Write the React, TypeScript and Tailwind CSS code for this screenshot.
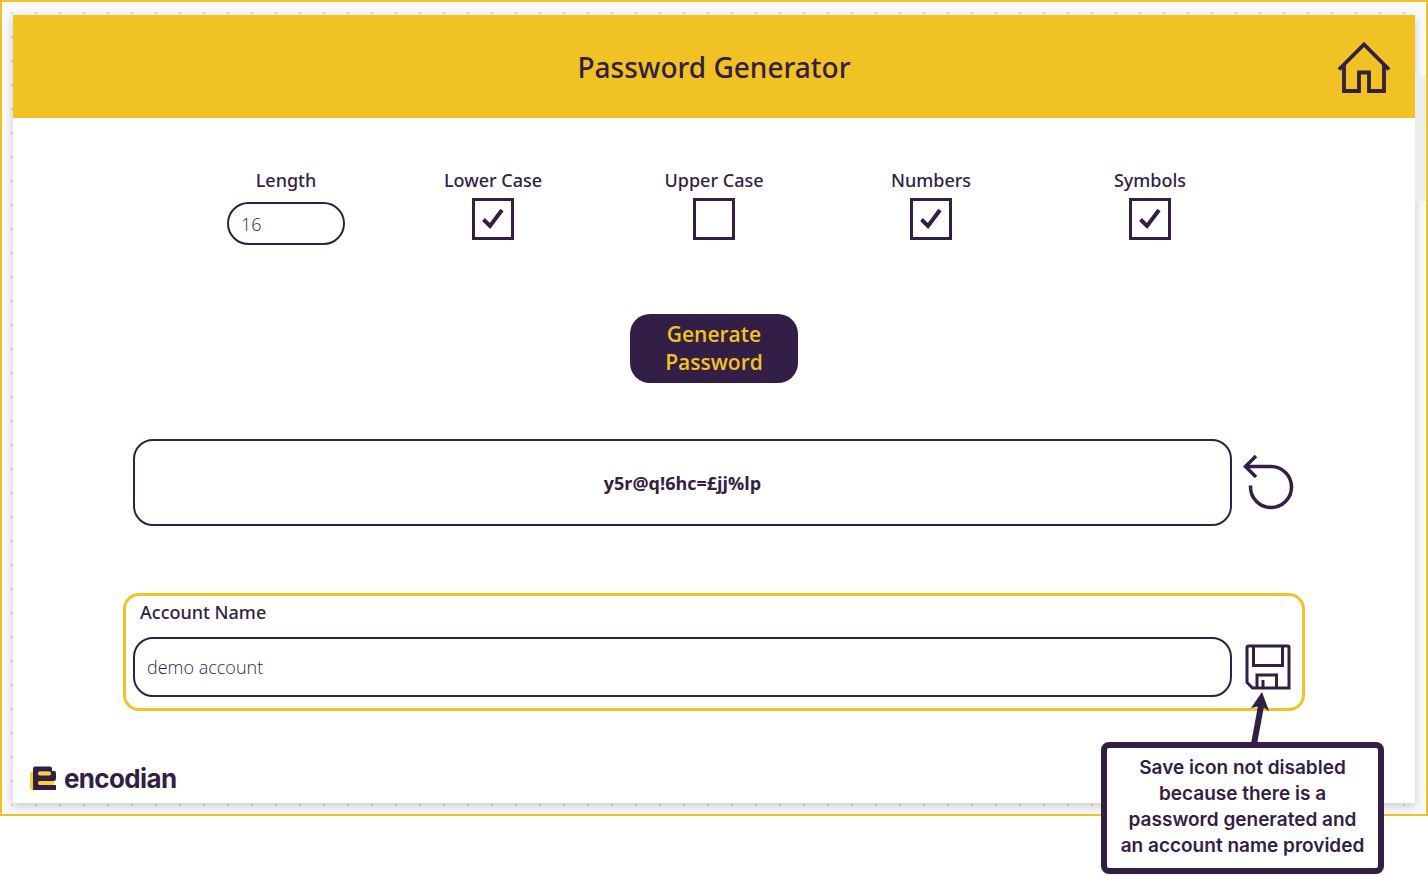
import React, { useState } from 'react';

const CHARSETS = {
  lower: 'abcdefghijklmnopqrstuvwxyz',
  upper: 'ABCDEFGHIJKLMNOPQRSTUVWXYZ',
  numbers: '0123456789',
  symbols: '!@£$%^&*=+?',
};

type CharsetKey = keyof typeof CHARSETS;

const OPTIONS: { key: CharsetKey; label: string }[] = [
  { key: 'lower', label: 'Lower Case' },
  { key: 'upper', label: 'Upper Case' },
  { key: 'numbers', label: 'Numbers' },
  { key: 'symbols', label: 'Symbols' },
];

const HomeIcon = () => (
  <svg width="54" height="54" viewBox="0 1 54 54" fill="none" stroke="currentColor" strokeWidth="3.8">
    <path d="M2 30.500 27 5.500 52 30.500" />
    <path d="M7 26v26h15V33.500h10V52H47V26" />
  </svg>
);

const UndoIcon = () => (
  <svg width="54" height="56" viewBox="0 0 54 56" fill="none" stroke="currentColor" strokeWidth="3.5">
    <path d="M4 11.500H30A20.500 20.500 0 1 1 9.500 32V30.500" />
    <path d="M15 1 4.500 11.500 15 22" />
  </svg>
);

const SaveIcon = () => (
  <svg width="46" height="46" viewBox="0 0 46 46" fill="none" stroke="currentColor" strokeWidth="3">
    <path d="M3.500 2H43q1 0 1 1v41H7.500L2 38.500V3.500Q2 2 3.500 2Z" />
    <path d="M8.500 2v19.500h29V2" />
    <path d="M12 44V31h19.500v13M18 36v8" />
  </svg>
);

const CheckMark = () => (
  <svg
    className="pointer-events-none col-start-1 row-start-1 hidden peer-checked:block"
    width="24"
    height="22"
    viewBox="0 0 24 22"
    fill="none"
    stroke="currentColor"
    strokeWidth="4"
  >
    <path d="M2.500 11.500 9 18 21 2" />
  </svg>
);

const Logo = () => (
  <div className="flex items-center gap-2">
    <svg width="26" height="26" viewBox="0 0 26 26">
      <path d="M3 6H1Q0 6 0 8V22q0 2 2 2H24V6Z" fill="#fcd02f" />
      <path
        d="M5 .5H20Q22 .5 22 2.500V5h2.500Q26 5 26 7v5.500q0 2.500-2.500 2.500H9.500q-1.500 0-1.500 2t1.500 2H26V24H3V2.500Q3 .5 5 .5ZM9.500 5.500q-1.500 0-1.500 2t1.500 2h10q1.500 0 1.500-2t-1.500-2Z"
        fill="#331e45"
        fillRule="evenodd"
      />
    </svg>
    <span className="font-['Inter',sans-serif] text-[26px] leading-8 font-bold tracking-tight">encodian</span>
  </div>
);

const Callout = () => (
  <div className="absolute right-11 top-[692px] w-[283px]">
    <svg className="ml-[146px]" width="26" height="50" viewBox="0 0 26 50">
      <path d="M7 52 14 14" stroke="#331e45" strokeWidth="6" fill="none" />
      <path d="M15 0 22 19 14 14 4 16Z" fill="#331e45" />
    </svg>
    <p className="rounded-lg border-6 border-[#331e45] bg-white pt-[7px] pb-[9px] text-center font-['Inter',sans-serif] text-[19px] leading-[26px] font-semibold">
      Save icon not disabled
      <br />
      because there is a
      <br />
      password generated and
      <br />
      an account name provided
    </p>
  </div>
);

const App: React.FC = () => {
  const [length, setLength] = useState('16');
  const [enabled, setEnabled] = useState<Record<CharsetKey, boolean>>({
    lower: true,
    upper: false,
    numbers: true,
    symbols: true,
  });
  const [password, setPassword] = useState('y5r@q!6hc=£jj%lp');
  const [account, setAccount] = useState('demo account');

  const generate = () => {
    const pool = OPTIONS.filter((o) => enabled[o.key]).map((o) => CHARSETS[o.key]).join('');
    if (!pool) return;
    const chars = Array.from({ length: Number(length) || 0 }, () => pool[Math.floor(Math.random() * pool.length)]);
    setPassword(chars.join(''));
  };

  const reset = () => {
    setPassword('');
    setAccount('');
  };

  return (
    <div className="relative bg-white pb-15 font-['Open_Sans',sans-serif] text-[#331e45]">
      <div className="flex border-2 border-[#f0c224] bg-[#fafafa] bg-[conic-gradient(from_270deg_at_2px_2px,#d9d9d9_90deg,transparent_0deg)] bg-[length:24px_24px] bg-position-[9px_10px] pt-[13px] pb-[11px] pl-[11px]">
        <main className="grow bg-white shadow-[0_3px_10px_rgba(0,0,0,0.2)]">
          <header className="grid h-[103px] grid-cols-[1fr_auto_1fr] items-center bg-[#f0c224] px-6">
            <h1 className="col-start-2 font-['Noto_Sans',sans-serif] text-[28px] leading-9 font-medium">Password Generator</h1>
            <a href="#home" aria-label="Home" className="justify-self-end">
              <HomeIcon />
            </a>
          </header>

          <section className="grid grid-cols-[200fr_214fr_228fr_206fr_232fr] pt-[49px] pr-[149px] pl-[173px] text-lg leading-[26px] font-medium">
            <div className="flex flex-col items-center gap-[9px]">
              <label htmlFor="length" className="font-['Noto_Sans',sans-serif]">
                Length
              </label>
              <input
                id="length"
                value={length}
                onChange={(e) => setLength(e.target.value)}
                className="h-[43px] w-[118px] rounded-full border-2 border-[#331e45] px-3 font-light outline-none"
              />
            </div>
            {OPTIONS.map((option) => (
              <div key={option.key} className="flex flex-col items-center gap-[5px]">
                <label htmlFor={option.key} className="font-['Noto_Sans',sans-serif]">
                  {option.label}
                </label>
                <div className="grid place-items-center">
                  <input
                    id={option.key}
                    type="checkbox"
                    checked={enabled[option.key]}
                    onChange={() => setEnabled({ ...enabled, [option.key]: !enabled[option.key] })}
                    className="peer col-start-1 row-start-1 size-[42px] appearance-none border-3 border-[#331e45]"
                  />
                  <CheckMark />
                </div>
              </div>
            ))}
          </section>

          <div className="flex justify-center pt-[69px]">
            <button
              onClick={generate}
              className="w-[168px] rounded-[20px] bg-[#331e45] px-8 pt-[6px] pb-[7px] text-[21px] leading-7 font-semibold text-[#f0c224]"
            >
              Generate Password
            </button>
          </div>

          <div className="flex items-center gap-[9px] pt-14 pr-[120px] pl-[120px]">
            <output className="flex h-[87px] grow items-center justify-center rounded-[20px] border-2 border-[#331e45] text-lg font-bold">
              {password}
            </output>
            <button onClick={reset} aria-label="Reset">
              <UndoIcon />
            </button>
          </div>

          <div className="px-[110px] pt-[67px]">
            <section className="rounded-2xl border-3 border-[#f0c224] px-[7px] pt-[3px] pb-[11px]">
              <label htmlFor="account" className="block px-[7px] font-['Noto_Sans',sans-serif] text-lg leading-[26px] font-medium">
                Account Name
              </label>
              <div className="flex items-center gap-[13px] pt-3 pr-1">
                <input
                  id="account"
                  value={account}
                  onChange={(e) => setAccount(e.target.value)}
                  className="h-[60px] min-w-0 grow rounded-[20px] border-2 border-[#331e45] px-3 text-lg font-light outline-none"
                />
                <button aria-label="Save" disabled={!password || !account} className="disabled:opacity-40">
                  <SaveIcon />
                </button>
              </div>
            </section>
          </div>

          <footer className="px-[17px] pt-[52px] pb-2">
            <Logo />
          </footer>
        </main>
        <div className="mt-[60px] h-[126px] w-[11px] bg-[#eeeeee]" />
      </div>
      <Callout />
    </div>
  );
};

export default App;
